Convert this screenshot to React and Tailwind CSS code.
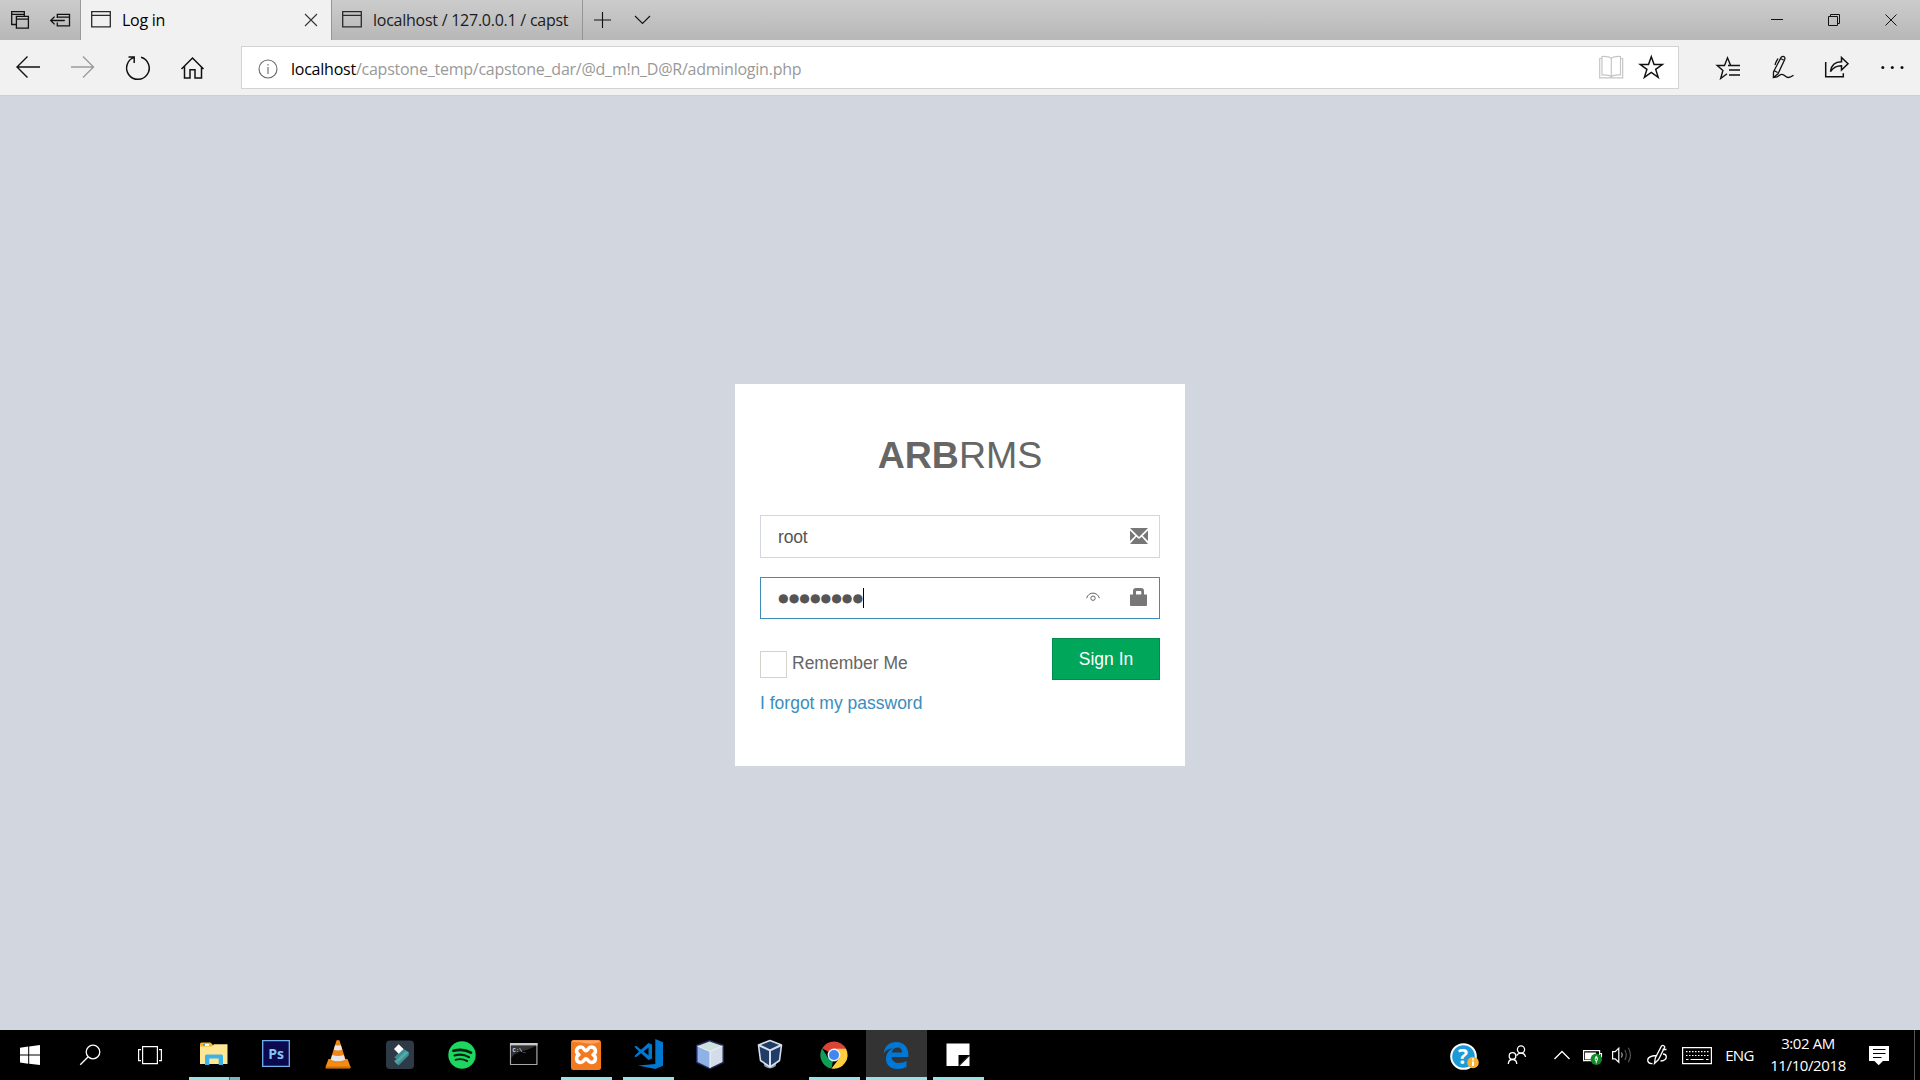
import React from "react";

const ICON_INK = "#111";

// Line-art canvas: x/y/w/h describe the window of screen space the drawing uses.
function Art({ x, y, w, h, children, stroke = ICON_INK, sw = 1.2, className = "" }) {
  return (
    <svg
      width={w}
      height={h}
      viewBox={`${x} ${y} ${w} ${h}`}
      fill="none"
      stroke={stroke}
      strokeWidth={sw}
      className={`block shrink-0 ${className}`}
    >
      {children}
    </svg>
  );
}

function WindowGlyph({ x }) {
  return (
    <Art x={0} y={0} w={20} h={40} stroke="#2a2a2a" sw={1.3} className={x}>
      <path d="M.7 11.7h18.6v15.1H.7zM.7 15.3h18.6" />
    </Art>
  );
}

function TitleBar() {
  return (
    <div className="flex h-10 bg-gradient-to-b from-[#cccccc] to-[#b7b7b7] text-[16px] text-[#1b1b1b]">
      <div className="flex w-[81px] border-r border-[#9b9b9b]">
        <Art x={0} y={0} w={40} h={40} sw={1.3}>
          <path d="M16 24.5h-4.3v-12.8h12.6V16M11.7 14.3h12.6M16.4 16.4h12v11.8h-12zM16.4 19.2h12" />
        </Art>
        <Art x={40} y={0} w={40} h={40} sw={1.3}>
          <path d="M57.3 18v-3.6h12.2v11.4H57.3v-3.2M57.3 17.2h12.2M50.8 20.5h14M54.6 16.6l-3.9 3.9 3.9 3.9" />
        </Art>
      </div>
      <div className="flex w-[250px] items-center bg-[#f1f1f1]">
        <WindowGlyph x="ml-2.5" />
        <span className="ml-[11px] w-[182px] whitespace-nowrap tracking-[-0.25px] text-black">Log in</span>
        <Art x={304} y={0} w={14} h={40} stroke="#333" sw={1.1}>
          <path d="M305 14l12 12M317 14l-12 12" />
        </Art>
      </div>
      <div className="flex w-[252px] items-center border-l border-r border-[#959595]">
        <WindowGlyph x="ml-2.5" />
        <span className="ml-[11px] w-[198px] overflow-hidden whitespace-nowrap tracking-[-0.25px]">localhost / 127.0.0.1 / capst</span>
      </div>
      <Art x={583} y={0} w={40} h={40} sw={1.1}>
        <path d="M594 20h17M602.5 12v16" />
      </Art>
      <Art x={623} y={0} w={40} h={40} sw={1.1}>
        <path d="M635 16l7.5 7.5L650 16" />
      </Art>
      <div className="flex-1" />
      <Art x={1748} y={0} w={57} h={40} sw={1}>
        <path d="M1771 19.5h12" />
      </Art>
      <Art x={1805} y={0} w={57} h={40} sw={1}>
        <path d="M1828.5 16.5h9v9h-9zM1830.5 16v-1.5h9v9H1838" />
      </Art>
      <Art x={1862} y={0} w={58} h={40} sw={1}>
        <path d="M1885.5 14.5l11 11M1896.5 14.5l-11 11" />
      </Art>
    </div>
  );
}

function Toolbar() {
  return (
    <div className="flex h-14 items-start border-b border-[#cfcfcf] bg-[#f1f1f1]">
      <Art x={0} y={40} w={55} h={55} sw={1.4}>
        <path d="M17 67h23M27.5 56.5L17 67l10.500 10.500" />
      </Art>
      <Art x={55} y={40} w={55} h={55} stroke="#9c9c9c" sw={1.4}>
        <path d="M71 67h23M83 56.500L93.500 67 83 77.500" />
      </Art>
      <Art x={110} y={40} w={55} h={55} sw={1.5}>
        <path d="M141 57.200a11.300 11.300 0 1 1-6.800.2M128.500 57h5.700v6" />
      </Art>
      <Art x={165} y={40} w={55} h={55} sw={1.5}>
        <path d="M181.500 69L192.500 58l11 11M184.500 66.500V78h5.500v-8.200h5V78h6.500V66.500" />
      </Art>
      <div className="ml-[21px] mt-1.5 flex h-[43px] w-[1438px] items-center border border-[#d3d3d3] bg-white">
        <Art x={258} y={58} w={20} h={20} stroke="#6a6a6a" sw={1.1} className="ml-4 mt-0.5">
          <circle cx="268" cy="68" r="9" />
          <path d="M268 66v7M268 63v1.500" />
        </Art>
        <span className="ml-[13px] mt-0.5 flex-1 whitespace-nowrap text-[16px] tracking-[-0.24px] text-[#999]">
          <span className="text-black">localhost</span>/capstone_temp/capstone_dar/@d_m!n_D@R/adminlogin.php
        </span>
        <Art x={1598} y={55} w={27} h={27} stroke="#c6c6c6" sw={1.2}>
          <path d="M1602 59.500h-2.300v19.300h23V59.500h-2.300M1611.300 59.500c-2-2-5-2.200-9.300-2v18.500c4.500-.2 7.300 0 9.300 1.700 2-1.700 4.700-1.900 9.200-1.700V57.500c-4.300-.2-7.200 0-9.200 2zM1611.300 59.500v18" />
        </Art>
        <Art x={1636} y={55} w={30} h={27} sw={1.5} className="ml-[11px] mr-3">
          <path d="M1651.300 57.800l2.800 7.700h8.200l-6.600 4.900 2.500 8-6.900-4.900-6.900 4.900 2.500-8-6.600-4.900h8.200z" />
        </Art>
      </div>
      <Art x={1700} y={40} w={55} h={55} sw={1.4} className="ml-[21px]">
        <path d="M1740 65.500h-9.300l-3.200-7.700-3 7.700h-7.300l5.700 5-2.200 8 6.300-4.700M1728 65.500h12M1729 70h11M1729 75h11" />
      </Art>
      <Art x={1755} y={40} w={55} h={55} sw={1.3}>
        <path d="M1781.200 57.200c1.700-1.500 4.300-.5 3.600 2l-6.800 14.600-4.600 3.600.1-5.600zM1774 70.500l3.500 2M1778 58.500c-1.500 2.500-2.500 4-3 6.500M1780.500 58.500l4 2M1773.500 77.300c3 .5 4-.2 6-2 2.500-2.300 4.500-.5 6 1 1.800 1.900 5 1.200 8-1" />
      </Art>
      <Art x={1810} y={40} w={55} h={55} sw={1.5}>
        <path d="M1825.700 62v14.700h17.600v-3.500M1830.500 71.500c.7-6 4.500-9.600 11-9.700v-4.300l6.500 6.300-6.500 6.200v-4.300c-5 0-8 1.400-11 5.800z" />
      </Art>
      <Art x={1865} y={40} w={55} h={55} stroke="none">
        <g fill="#111">
          <circle cx="1882.800" cy="67.500" r="1.500" />
          <circle cx="1892.300" cy="67.500" r="1.500" />
          <circle cx="1902" cy="67.500" r="1.500" />
        </g>
      </Art>
    </div>
  );
}

function LoginCard() {
  return (
    <div className="mt-[288px] h-[382px] w-[450px] bg-white px-[25px] pt-[25px] font-['Liberation_Sans',Arial,sans-serif] text-[17.5px] leading-[25px] text-[#666]">
      <h1 className="h-[106px] pt-[23px] text-center text-[37.5px] leading-[46px]">
        <b>ARB</b>RMS
      </h1>
      <div className="flex h-[43px] items-center border border-[#d2d6de] pl-[17px] pr-[11px] text-[#555]">
        <span className="flex-1 pt-0.5 tracking-[-0.2px]">root</span>
        <svg width="18" height="16" viewBox="0 0 18 16" fill="#777" className="-mt-px block">
          <path d="M0 0h18L9 9zM0 2.500l5.300 5.200L0 13zM18 2.500V13l-5.300-5.300zM6.300 8.700L9 11l2.700-2.300L18 16H0z" />
        </svg>
      </div>
      <div className="mt-[19px] flex h-[42px] items-center border border-[#3c8dbc] pl-[17px] pr-3 text-[#555]">
        <span className="font-['DejaVu_Sans',sans-serif] text-[12.2px]">●●●●●●●●</span>
        <span className="h-5 w-px bg-black" />
        <span className="flex-1" />
        <svg width="14" height="10" viewBox="0 0 14 10" fill="none" stroke="#666" className="mr-[30px] -mt-0.5 block">
          <path d="M.6 6.200C2.500-.6 11.500-.6 13.400 6.200" />
          <circle cx="7" cy="6.200" r="2.200" />
        </svg>
        <svg width="17" height="18" viewBox="0 0 17 18" fill="#777" className="-mt-0.5 block">
          <path d="M0 6.500h3V3Q3 0 6 0h5q3 0 3 3v3.500h3V17q0 1-1 1H1q-1 0-1-1zM6 6.500h5.300V3.700Q11.300 3 10.600 3H6.700Q6 3 6 3.700z" />
        </svg>
      </div>
      <div className="mt-[19px] flex h-[42px] items-start">
        <span className="mt-[13px] h-[27px] w-[27px] border border-[#d5d2cc]" />
        <span className="ml-[5px] mt-[13px] flex-1">Remember Me</span>
        <button className="h-[42px] w-[108px] border border-[#008d4c] bg-[#00a65a] pt-[1px] text-center text-white">Sign In</button>
      </div>
      <a className="mt-[11px] block text-[#3c8dbc]">I forgot my password</a>
    </div>
  );
}

function TaskItem({ open, active, children }) {
  return (
    <div className="flex w-[62px] flex-col items-center">
      <div className={`flex h-[47px] items-center justify-center ${active ? "w-[61px] bg-[#333]" : "w-[51px]"}`}>{children}</div>
      {open && <div className={`h-[3px] bg-[#92e3ea] ${active ? "w-[61px]" : "w-[51px]"}`} />}
    </div>
  );
}

// 32px application icon
function App32({ children, className = "" }) {
  return (
    <svg width="32" height="32" viewBox="0 0 32 32" className={`mt-[3px] block ${className}`}>
      {children}
    </svg>
  );
}

function Taskbar() {
  return (
    <div className="flex h-[50px] bg-black text-white">
      <Art x={0} y={1030} w={60} h={50} stroke="none">
        <path fill="#fff" d="M20 1047.800l8.200-1.200v8H20zM29.200 1046.500l10.800-1.500v9.600h-10.800zM20 1055.600h8.200v8.200L20 1062.600zM29.200 1055.600H40v9.400l-10.800-1.200z" />
      </Art>
      <Art x={60} y={1030} w={60} h={50} stroke="#fff" sw={1.3}>
        <circle cx="93" cy="1052" r="6.800" />
        <path d="M88.200 1056.800l-8 8" />
      </Art>
      <Art x={120} y={1030} w={63} h={50} stroke="#fff" sw={1.2}>
        <path d="M142.600 1046.600h14.800v17h-14.800zM141 1049.600h-2.400v11h2.400M159 1049.600h2.400v11H159" />
      </Art>
      <div className="flex w-[62px] flex-col items-center">
        <div className="flex h-[47px] items-center">
          <App32>
            <path fill="#f3b81f" d="M2 5q0-1.500 1.500-1.500h9L15 6v4H2z" />
            <path fill="#fff" d="M5 5h6v1.800H5z" />
            <path fill="#2f9fe0" d="M5 5h2v1.800H5z" />
            <path fill="#ffe694" d="M2 7.500h12l2-2.200h13.500V25H2z" />
            <path fill="#3bb3e8" d="M7 26V17q0-1.500 1.500-1.500h15Q25 15.500 25 17v9h-4.300v-6.500h-9.400V26z" />
          </App32>
        </div>
        <div className="flex h-[3px]">
          <span className="w-10 bg-[#92e3ea]" />
          <span className="w-[11px] border-l border-[#3c6b70] bg-[#74b6bb]" />
        </div>
      </div>
      <TaskItem>
        <App32 className="-translate-y-px">
          <path fill="#0c0a4e" stroke="#72b1ee" strokeWidth="1.300" d="M2.700 2.700h26.600v25.600H2.700z" />
          <text x="16" y="21" textAnchor="middle" fontFamily="Open Sans, sans-serif" fontWeight="700" fontSize="14" fill="#86c4f5">Ps</text>
        </App32>
      </TaskItem>
      <TaskItem>
        <App32>
          <path fill="#f28c13" d="M6.500 20h19L28.500 28q.2 1.500-1 1.500h-23q-1.200 0-1-1.500z" />
          <path fill="#d96a08" d="M4 27.500h24.500V29H4z" />
          <path fill="#f08519" d="M14.500 1.500q1.500-.8 3 0L24 22q-8 4.500-16 0z" />
          <path fill="#e8e8e8" d="M13.200 6q2.800 1 5.600 0l1.500 4.800q-4.300 1.600-8.600 0zM10.300 16q5.700 2 11.400 0l1.500 4.800q-7.200 3-14.400 0z" />
        </App32>
      </TaskItem>
      <TaskItem>
        <App32>
          <rect x="2" y="1.500" width="28" height="28.500" rx="4" fill="#2f3a47" />
          <path fill="#3d9094" d="M10.500 18.300L19 9.500l5.800 3.700v3L14.500 26.500l-4-4 3-2z" />
          <path fill="#69b9b8" d="M10.500 18.300l3 2 8-8 3.300 1-9.500 9h-3l2 1.500-1 1.500-3.200-3.500 2.300-1.500z" opacity=".6" />
          <path fill="#fff" d="M14.700 5.200l4.800 4.800-4.800 4.800L10 10z" />
        </App32>
      </TaskItem>
      <TaskItem>
        <App32>
          <circle cx="16" cy="16" r="13.700" fill="#1ed760" />
          <path fill="none" stroke="#08210f" strokeLinecap="round" strokeWidth="2.700" d="M7.500 11.800q9.500-2.700 17.500 1.800" />
          <path fill="none" stroke="#08210f" strokeLinecap="round" strokeWidth="2.200" d="M8.500 16.500q7.800-2.200 14.500 1.600" />
          <path fill="none" stroke="#08210f" strokeLinecap="round" strokeWidth="1.800" d="M9.500 20.800q6.500-1.700 11.700 1.300" />
        </App32>
      </TaskItem>
      <TaskItem>
        <App32>
          <path fill="#050505" stroke="#a5a9ab" strokeWidth="1.200" d="M2.500 4.500h26.400v21H2.500z" />
          <path fill="#c6cacc" d="M2 4h27.500v2.600H2z" />
          <path fill="#333" d="M3.200 6.800h25L19 11Q8 12 3.200 19z" />
          <text x="4.500" y="12.500" fontFamily="Liberation Mono, monospace" fontSize="5.500" fontWeight="bold" fill="#ddd">C:\_</text>
        </App32>
      </TaskItem>
      <TaskItem open>
        <App32>
          <rect x="1" y="1" width="30" height="30" rx="2.500" fill="#f47a20" />
          <path fill="#f9a569" d="M2 3q0-1.500 1.500-1.500h25Q30 1.500 30 3q-7 2.500-14 1.200T2 3z" />
          <path
            fill="none"
            stroke="#fff"
            strokeLinejoin="round"
            strokeWidth="3.500"
            d="M16 11.800C18 11.800 18 8 21 8C26.500 8 26.500 14 23 15.700C26.500 17.400 26.500 23.500 21 23.500C18 23.500 18 19.700 16 19.700C14 19.700 14 23.500 11 23.500C5.500 23.500 5.500 17.400 9 15.700C5.500 14 5.500 8 11 8C14 8 14 11.800 16 11.800z"
          />
        </App32>
      </TaskItem>
      <TaskItem open>
        <App32>
          <path fill="#0078d0" d="M23.300 0L31 3.300v23.400L23.300 30 6 26.600 23.300 25z" />
          <path
            fill="#0078d0"
            fillRule="evenodd"
            d="M16.500 4L20 5.500v14L16.500 21 9 14.300l-5 4-1.700-1 4.700-4.800-4.700-4.800 1.700-1 5 4zM16.500 8.500l-5 4 5 4z"
          />
        </App32>
      </TaskItem>
      <TaskItem>
        <App32>
          <path fill="none" stroke="#22285a" strokeWidth="3" strokeLinejoin="round" d="M15.500 2.500L28.500 7v16L16 29 3.500 23V7z" />
          <path fill="#cde0dc" d="M15.500 2.500L28.500 7 16 12.500 3.500 7z" />
          <path fill="#8eb1e6" d="M3.500 7L16 12.500V29L3.500 23z" />
          <path fill="#d4dcea" d="M28.500 7L16 12.500V29l12.500-6z" />
          <path fill="none" stroke="#f3f9ff" strokeWidth="1" d="M3.500 7L16 12.500 28.500 7M16 12.500V29" />
        </App32>
      </TaskItem>
      <TaskItem>
        <App32 className="-translate-x-0.5">
          <path fill="#8490ab" d="M10 25q6-3 12 0 1 3-6 4.500Q9 28 10 25z" />
          <path fill="#1f3d66" stroke="#d7dfec" strokeWidth="1.600" strokeLinejoin="round" d="M16 1.500L27.500 6l-2 15.500L16 28l-9.500-6.500L4.500 6z" />
          <path fill="none" stroke="#d7dfec" strokeWidth="2" d="M4.500 6L16 11.500 27.500 6M16 11.500V28" />
        </App32>
      </TaskItem>
      <TaskItem open>
        <App32>
          <path fill="#db4437" d="M16 16L4.100 9.200A13.800 13.800 0 0 1 28 9.500z" />
          <path fill="#0f9d58" d="M16 16l-2.500 13.600A13.800 13.800 0 0 1 4.100 9.200L10 19z" />
          <path fill="#ffcd40" d="M16 9.700h12A13.800 13.800 0 0 1 13.500 29.600L21.500 19z" />
          <circle cx="16" cy="16" r="6.400" fill="#f1f1f1" />
          <circle cx="16" cy="16" r="5" fill="#4285f4" />
        </App32>
      </TaskItem>
      <TaskItem open active>
        <App32>
          <path fill="#0078d7" d="M3.500 14.500C5 6.500 10 3 16 3c8 0 12.300 5.500 12.300 12v3H11.500c.3 4 4 6 7.500 6 3 0 5.500-.7 7.500-2v6c-2.500 1.300-5.500 2-9 2C10 30 6 25.500 6 20c0-5 2.500-8.500 7-11-4.500.5-7.500 2.500-9.500 5.500zM11.700 13.500h10.500c0-3-1.700-5-4.700-5-3.300 0-5.300 2.200-5.800 5z" fillRule="evenodd" />
        </App32>
      </TaskItem>
      <TaskItem open>
        <App32>
          <path fill="#fff" d="M4.500 4.500h23V16l-11 11h-12z" />
          <path fill="#fff" d="M27.500 17v10h-10z" />
          <path fill="#000" d="M16.500 16h11l-11 11z" />
        </App32>
      </TaskItem>
      <div className="flex-1" />
      <Art x={1446} y={1030} w={35} h={50} stroke="none">
        <circle cx="1463.500" cy="1056.500" r="13.300" fill="#fff" />
        <circle cx="1463.500" cy="1056.500" r="11.300" fill="#1d9ad6" />
        <text x="1463" y="1064" textAnchor="middle" fontFamily="Open Sans, sans-serif" fontWeight="700" fontSize="21" fill="#fff">?</text>
        <circle cx="1473" cy="1062.500" r="5.800" fill="#f5b335" />
        <path fill="#fff" d="M1472 1061.500h2v4.500h-2zM1472 1058.500h2v2h-2z" />
      </Art>
      <Art x={1481} y={1030} w={65} h={50} stroke="#fff" sw={1.3}>
        <circle cx="1512.500" cy="1056" r="3.300" />
        <circle cx="1521" cy="1049.500" r="3.600" />
        <path d="M1508.300 1064c.3-6 8.200-6 8.500 0M1516.500 1055.500c2.500-3.500 8.500-3 9 1.500" />
      </Art>
      <Art x={1546} y={1030} w={32} h={50} stroke="#fff" sw={1.3}>
        <path d="M1554.500 1059l7.500-7.500 7.500 7.500" />
      </Art>
      <Art x={1578} y={1030} w={30} h={50} stroke="#fff" sw={1.2}>
        <path d="M1583.600 1050.600h16v10h-16zM1600 1053.500h1.500v4" />
        <path stroke="none" fill="#fff" d="M1585 1052.500h11v7h-11z" />
        <circle cx="1596.300" cy="1059.300" r="5.700" stroke="none" fill="#0f8a25" />
        <path stroke="none" fill="#dff3df" d="M1596.300 1055.500q3.500 3.500 0 6.500-3.500-3 0-6.500zM1595.800 1061h1v2.300h-1z" />
        <circle cx="1596.300" cy="1059.200" r=".8" stroke="none" fill="#0f8a25" />
      </Art>
      <Art x={1608} y={1030} w={34} h={50} stroke="#fff" sw={1.2}>
        <path d="M1612.600 1051.600h2.600l3.600-3.500v14.200l-3.600-3.500h-2.600z" />
        <path stroke="#aaa" d="M1621.500 1052.500q1.500 2.500 0 5" />
        <path stroke="#555" d="M1624.800 1050q3 5 0 10M1628.300 1047.800q4.300 7.200 0 14.400" />
      </Art>
      <Art x={1642} y={1030} w={32} h={50} stroke="#fff" sw={1.3}>
        <path d="M1654.500 1063.500l.8-5.500 6.200-12q2-1.500 3.300 1l-6.300 12.500zM1656.500 1055.500l-4 .5q-5.500 1.500-4.700 5 .8 3 4.700 2.500M1660.500 1061q6-.5 5.800-4.500-.3-2.500-3.300-2.500M1662.500 1049.500h4" />
      </Art>
      <Art x={1674} y={1030} w={48} h={50} stroke="#fff" sw={1.2}>
        <path d="M1682.600 1047.600h28.800v16h-28.800z" />
        <path strokeDasharray="1.500 1.500" d="M1686 1051.600h22.500M1686 1055.500h22.500" />
        <path d="M1686 1059.500h2.500M1690.500 1059.500h13M1706 1059.500h2.500" />
      </Art>
      <div className="flex w-9 items-center justify-center whitespace-nowrap pr-px text-[15px]">
        <span className="tracking-[-0.6px]">ENG</span>
      </div>
      <div className="flex w-[101px] flex-col items-center whitespace-nowrap pt-[2px] pr-px text-[15px] leading-[23px] tracking-[-0.4px]">
        <span>3:02 AM</span>
        <span className="-mt-px">11/10/2018</span>
      </div>
      <Art x={1859} y={1030} w={55} h={50} stroke="none">
        <path fill="#fff" d="M1869 1046h20v15h-6l-4.300 4.300-4.300-4.300H1869z" />
        <path stroke="#000" strokeWidth="1.200" d="M1873 1049.500h12.500M1873 1053.500h12.500M1873 1057.500h8.500" />
      </Art>
      <div className="w-1.5 border-l border-[#555]" />
    </div>
  );
}

export default function App() {
  return (
    <div className="flex h-[1080px] w-[1920px] flex-col overflow-hidden bg-[#d2d6de] font-['Open_Sans','Noto_Sans',sans-serif]">
      <TitleBar />
      <Toolbar />
      <main className="flex flex-1 justify-center">
        <LoginCard />
      </main>
      <Taskbar />
    </div>
  );
}
